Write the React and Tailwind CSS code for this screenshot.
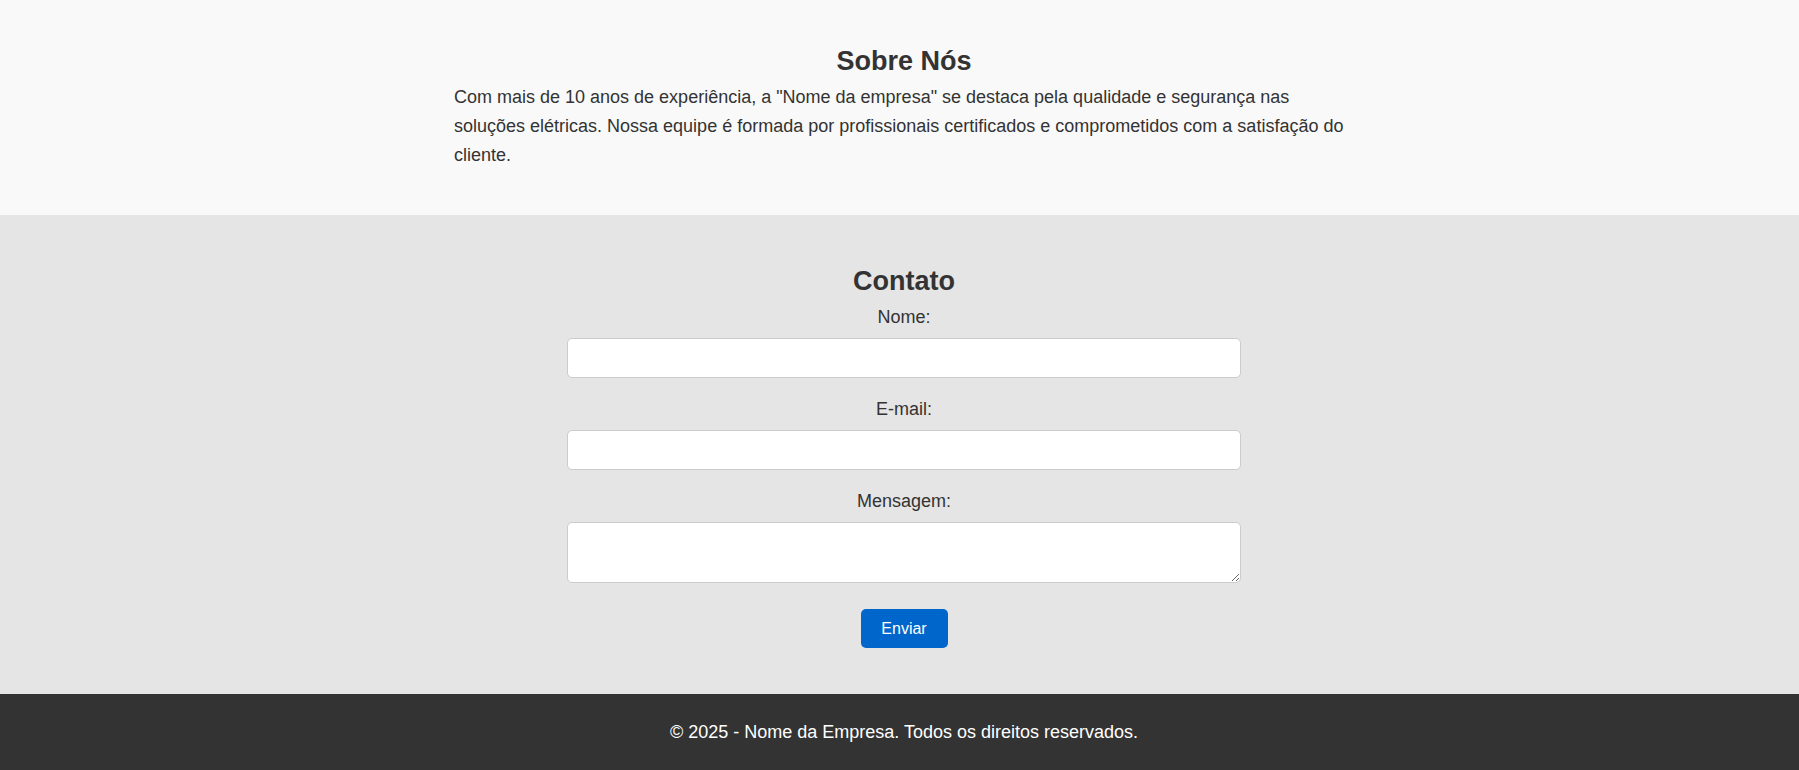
const font = { fontFamily: '"Liberation Sans", Arial, sans-serif' };

const Field = ({ label, id, first, multiline }) => (
  <div className={`flex flex-col items-center ${first ? '' : 'mt-[21px]'}`}>
    <label htmlFor={id} className="block text-[18px] leading-[21px] mb-[10px] text-[#333]">
      {label}
    </label>
    {multiline ? (
      <textarea
        id={id}
        className="w-[674px] h-[61px] bg-white border border-[#ccc] rounded-[5px] px-[10px] py-[8px] outline-none"
      />
    ) : (
      <input
        id={id}
        type={id === 'email' ? 'email' : 'text'}
        className="w-[674px] h-[40px] bg-white border border-[#ccc] rounded-[5px] px-[10px] outline-none"
      />
    )}
  </div>
);

const App = () => {
  return (
    <div style={font} className="min-h-screen text-[#333]">
      {/* Sobre */}
      <section className="bg-[#f9f9f9] pl-[9px] pt-[46px] pb-[46px]">
        <div className="w-[900px] mx-auto">
          <h2 className="text-[27px] leading-[31px] font-bold text-center">Sobre Nós</h2>
          <p className="mt-[6px] text-[18px] leading-[28.8px]">
            Com mais de 10 anos de experiência, a "Nome da empresa" se destaca pela qualidade e segurança nas
            soluções elétricas. Nossa equipe é formada por profissionais certificados e comprometidos com a
            satisfação do cliente.
          </p>
        </div>
      </section>

      {/* Contato */}
      <section className="bg-[#e5e5e5] pl-[9px] pt-[51px] pb-[46px]">
        <h2 className="text-[27px] leading-[31px] font-bold text-center">Contato</h2>
        <form className="mt-[10px] flex flex-col items-center" onSubmit={(e) => e.preventDefault()}>
          <Field label="Nome:" id="nome" first />
          <Field label="E-mail:" id="email" />
          <Field label="Mensagem:" id="mensagem" multiline />
          <button
            type="submit"
            className="mt-[26px] w-[87px] h-[39px] bg-[#0066cc] text-white text-[16px] rounded-[5px] cursor-pointer"
          >
            Enviar
          </button>
        </form>
      </section>

      {/* Rodapé */}
      <footer className="bg-[#333] pl-[9px] h-[77px] flex items-center justify-center">
        <p className="text-white text-[18px] leading-[21px]">© 2025 - Nome da Empresa. Todos os direitos reservados.</p>
      </footer>
    </div>
  );
};

export default App;
